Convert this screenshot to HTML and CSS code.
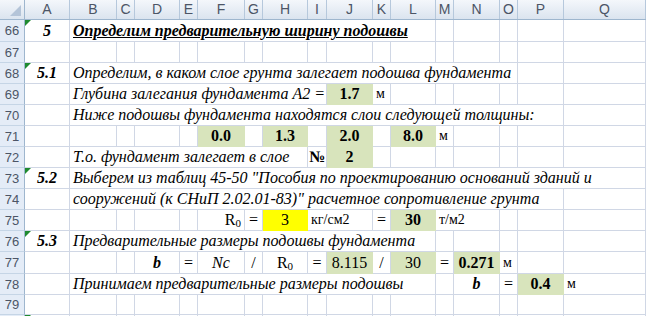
FILE: index.html
```html
<!DOCTYPE html>
<html lang="ru">
<head>
    <meta charset="UTF-8">
    <title>Лист расчета фундамента</title>
    <link rel="stylesheet" href="styles.css">
</head>
<body>
    <div class="sheet">
        <div class="row head">
            <div class="corner"></div>
            <div class="ch">A</div><div class="ch">B</div><div class="ch">C</div><div class="ch">D</div>
            <div class="ch">E</div><div class="ch">F</div><div class="ch">G</div><div class="ch">H</div>
            <div class="ch">I</div><div class="ch">J</div><div class="ch">K</div><div class="ch">L</div>
            <div class="ch">M</div><div class="ch">N</div><div class="ch">O</div><div class="ch">P</div>
            <div class="ch">Q</div>
        </div>

        <div class="row tall">
            <div class="rh">66</div>
            <div class="c num mark">5</div>
            <div class="c txt title s11">Определим предварительную ширину подошвы</div>
            <div class="c"></div><div class="c"></div><div class="c"></div><div class="c"></div><div class="c"></div>
        </div>

        <div class="row">
            <div class="rh">67</div>
            <div class="c"></div><div class="c"></div><div class="c"></div><div class="c"></div><div class="c"></div>
            <div class="c"></div><div class="c"></div><div class="c"></div><div class="c"></div><div class="c"></div>
            <div class="c"></div><div class="c"></div><div class="c"></div><div class="c"></div><div class="c"></div>
            <div class="c"></div><div class="c"></div>
        </div>

        <div class="row">
            <div class="rh">68</div>
            <div class="c num mark">5.1</div>
            <div class="c txt s14">Определим, в каком слое грунта залегает подошва фундамента</div>
            <div class="c"></div><div class="c"></div>
        </div>

        <div class="row">
            <div class="rh">69</div>
            <div class="c"></div>
            <div class="c txt s8">Глубина залегания фундамента А2 =</div>
            <div class="c val green bold">1.7</div>
            <div class="c unit">м</div>
            <div class="c"></div><div class="c"></div><div class="c"></div><div class="c"></div><div class="c"></div><div class="c"></div>
        </div>

        <div class="row">
            <div class="rh">70</div>
            <div class="c"></div>
            <div class="c txt s15">Ниже подошвы фундамента находятся слои следующей толщины:</div>
            <div class="c"></div>
        </div>

        <div class="row">
            <div class="rh">71</div>
            <div class="c"></div><div class="c"></div><div class="c"></div><div class="c"></div><div class="c"></div>
            <div class="c val green bold">0.0</div>
            <div class="c"></div>
            <div class="c val green bold">1.3</div>
            <div class="c"></div>
            <div class="c val green bold">2.0</div>
            <div class="c"></div>
            <div class="c val green bold">8.0</div>
            <div class="c unit">м</div>
            <div class="c"></div><div class="c"></div><div class="c"></div><div class="c"></div>
        </div>

        <div class="row">
            <div class="rh">72</div>
            <div class="c"></div>
            <div class="c txt s7">Т.о. фундамент залегает в слое</div>
            <div class="c val bold">№</div>
            <div class="c val green bold">2</div>
            <div class="c"></div><div class="c"></div><div class="c"></div><div class="c"></div><div class="c"></div><div class="c"></div><div class="c"></div>
        </div>

        <div class="row">
            <div class="rh">73</div>
            <div class="c num mark">5.2</div>
            <div class="c txt s16">Выберем из таблиц 45-50 "Пособия по проектированию оснований зданий и</div>
        </div>

        <div class="row">
            <div class="rh">74</div>
            <div class="c"></div>
            <div class="c txt s15">сооружений (к СНиП 2.02.01-83)" расчетное сопротивление грунта</div>
            <div class="c"></div>
        </div>

        <div class="row">
            <div class="rh">75</div>
            <div class="c"></div><div class="c"></div><div class="c"></div><div class="c"></div><div class="c"></div>
            <div class="c right"><span>R<sub>0</sub></span></div>
            <div class="c val">=</div>
            <div class="c val yellow">3</div>
            <div class="c unit s2">кг/см2</div>
            <div class="c val">=</div>
            <div class="c val green bold">30</div>
            <div class="c unit s2">т/м2</div>
            <div class="c"></div><div class="c"></div><div class="c"></div>
        </div>

        <div class="row">
            <div class="rh">76</div>
            <div class="c num mark">5.3</div>
            <div class="c txt s11">Предварительные размеры подошвы фундамента</div>
            <div class="c"></div><div class="c"></div><div class="c"></div><div class="c"></div><div class="c"></div>
        </div>

        <div class="row tall">
            <div class="rh">77</div>
            <div class="c"></div><div class="c"></div><div class="c"></div>
            <div class="c val ibold">b</div>
            <div class="c val">=</div>
            <div class="c val italic">Nc</div>
            <div class="c val">/</div>
            <div class="c val"><span>R<sub>0</sub></span></div>
            <div class="c val">=</div>
            <div class="c val green">8.115</div>
            <div class="c val">/</div>
            <div class="c val green">30</div>
            <div class="c val">=</div>
            <div class="c val green bold">0.271</div>
            <div class="c unit">м</div>
            <div class="c"></div><div class="c"></div>
        </div>

        <div class="row">
            <div class="rh">78</div>
            <div class="c"></div>
            <div class="c txt s11">Принимаем предварительные размеры подошвы</div>
            <div class="c"></div>
            <div class="c val ibold">b</div>
            <div class="c val">=</div>
            <div class="c val green bold">0.4</div>
            <div class="c unit">м</div>
        </div>

        <div class="row short">
            <div class="rh">79</div>
            <div class="c"></div><div class="c"></div><div class="c"></div><div class="c"></div><div class="c"></div>
            <div class="c"></div><div class="c"></div><div class="c"></div><div class="c"></div><div class="c"></div>
            <div class="c"></div><div class="c"></div><div class="c"></div><div class="c"></div><div class="c"></div>
            <div class="c"></div><div class="c"></div>
        </div>

        <div class="row">
            <div class="rh"></div>
            <div class="c mark"></div><div class="c"></div><div class="c"></div><div class="c"></div><div class="c"></div>
            <div class="c"></div><div class="c"></div><div class="c"></div><div class="c"></div><div class="c"></div>
            <div class="c"></div><div class="c"></div><div class="c"></div><div class="c"></div><div class="c"></div>
            <div class="c"></div><div class="c"></div>
        </div>
    </div>
</body>
</html>
```

FILE: styles.css
```css
* {
    margin: 0;
    padding: 0;
    box-sizing: border-box;
}

body {
    background: #ffffff;
    color: #000;
    overflow: hidden;
}

.sheet {
    width: 646px;
    height: 316px;
    overflow: hidden;
    font-family: "Liberation Serif", "Times New Roman", serif;
}

.row {
    display: grid;
    grid-template-columns: 25px 45px 47px 18px 45px 18px 47px 18px 45px 19px 46px 18px 45px 18px 46px 18px 46px 1fr;
    height: 21px;
}

.row.tall {
    height: 22px;
}

.row.short {
    height: 20px;
}

/* column headers */
.head {
    height: 20px;
    background: linear-gradient(#f4f7fb, #dbe4ef);
    border-bottom: 1px solid #9eb6ce;
}

.corner {
    position: relative;
    border-right: 1px solid #9eb6ce;
}

.corner::after {
    content: "";
    position: absolute;
    right: 3px;
    bottom: 3px;
    border-left: 11px solid transparent;
    border-bottom: 11px solid #b4c4d8;
}

.ch {
    border-right: 1px solid #b6c8dc;
    font-family: "Liberation Sans", Arial, sans-serif;
    font-size: 14px;
    color: #4c5566;
    text-align: center;
    line-height: 19px;
}

/* row headers */
.rh {
    background: #e4ecf7;
    border-right: 1px solid #9eb6ce;
    border-bottom: 1px solid #c5d5e6;
    font-family: "Liberation Sans", Arial, sans-serif;
    font-size: 13px;
    color: #4c5566;
    display: flex;
    align-items: center;
    justify-content: center;
}

/* cells */
.c {
    position: relative;
    border-right: 1px solid #d0d7e5;
    border-bottom: 1px solid #d0d7e5;
    display: flex;
    align-items: flex-end;
    padding: 0 3px 1px;
    white-space: nowrap;
    font-size: 16px;
    line-height: 18px;
}

.txt {
    font-style: italic;
}

.title {
    font-weight: bold;
    text-decoration: underline;
}

.num {
    justify-content: center;
    font-style: italic;
    font-weight: bold;
}

.val {
    justify-content: center;
}

.right {
    justify-content: flex-end;
}

.bold {
    font-weight: bold;
}

.italic {
    font-style: italic;
}

.ibold {
    font-style: italic;
    font-weight: bold;
}

.unit {
    font-size: 14px;
}

sub {
    font-size: 11px;
    vertical-align: -2px;
    line-height: 0;
}

.green {
    background: #d8e4bc;
    border-color: #d8e4bc;
}

.yellow {
    background: #ffff00;
    border-color: #ffff00;
}

/* green error marker in the corner */
.mark::before {
    content: "";
    position: absolute;
    left: 0;
    top: 0;
    border-top: 6px solid #1f8a2f;
    border-right: 6px solid transparent;
}

.s2 { grid-column: span 2; }
.s7 { grid-column: span 7; }
.s8 { grid-column: span 8; }
.s11 { grid-column: span 11; }
.s14 { grid-column: span 14; }
.s15 { grid-column: span 15; }
.s16 { grid-column: span 16; }
```
